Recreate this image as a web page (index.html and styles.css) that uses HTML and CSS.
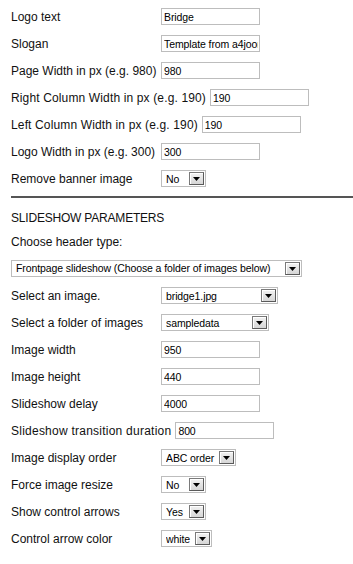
FILE: index.html
```html
<!DOCTYPE html>
<html>
<head>
<meta charset="utf-8">
<link rel="stylesheet" href="styles.css">
</head>
<body>
<div class="panel">
  <div class="row"><label class="lbl">Logo text</label><input class="txt" type="text" value="Bridge"></div>
  <div class="row"><label class="lbl">Slogan</label><input class="txt" type="text" value="Template from a4joomla"></div>
  <div class="row"><label class="lbl">Page Width in px (e.g. 980)</label><input class="txt" type="text" value="980"></div>
  <div class="row"><label class="lbl long">Right Column Width in px (e.g. 190)</label><input class="txt" type="text" value="190"></div>
  <div class="row"><label class="lbl long">Left Column Width in px (e.g. 190)</label><input class="txt" type="text" value="190"></div>
  <div class="row"><label class="lbl">Logo Width in px (e.g. 300)</label><input class="txt" type="text" value="300"></div>
  <div class="row"><label class="lbl">Remove banner image</label><span class="sel w45"><span class="sel-text">No</span><span class="sel-btn"><svg width="7" height="4" viewBox="0 0 7 4"><path d="M0 0H7L3.5 4Z" fill="#000"/></svg></span></span></div>

  <div class="sep"></div>

  <div class="heading">SLIDESHOW PARAMETERS</div>
  <div class="plain">Choose header type:</div>
  <div class="wide-row"><span class="sel w291"><span class="sel-text">Frontpage slideshow (Choose a folder of images below)</span><span class="sel-btn"><svg width="7" height="4" viewBox="0 0 7 4"><path d="M0 0H7L3.5 4Z" fill="#000"/></svg></span></span></div>

  <div class="row"><label class="lbl">Select an image.</label><span class="sel w117"><span class="sel-text">bridge1.jpg</span><span class="sel-btn"><svg width="7" height="4" viewBox="0 0 7 4"><path d="M0 0H7L3.5 4Z" fill="#000"/></svg></span></span></div>
  <div class="row"><label class="lbl">Select a folder of images</label><span class="sel w108"><span class="sel-text">sampledata</span><span class="sel-btn"><svg width="7" height="4" viewBox="0 0 7 4"><path d="M0 0H7L3.5 4Z" fill="#000"/></svg></span></span></div>
  <div class="row"><label class="lbl">Image width</label><input class="txt" type="text" value="950"></div>
  <div class="row"><label class="lbl">Image height</label><input class="txt" type="text" value="440"></div>
  <div class="row"><label class="lbl">Slideshow delay</label><input class="txt" type="text" value="4000"></div>
  <div class="row"><label class="lbl longer">Slideshow transition duration</label><input class="txt" type="text" value="800"></div>
  <div class="row"><label class="lbl">Image display order</label><span class="sel w75"><span class="sel-text">ABC order</span><span class="sel-btn"><svg width="7" height="4" viewBox="0 0 7 4"><path d="M0 0H7L3.5 4Z" fill="#000"/></svg></span></span></div>
  <div class="row"><label class="lbl">Force image resize</label><span class="sel w45"><span class="sel-text">No</span><span class="sel-btn"><svg width="7" height="4" viewBox="0 0 7 4"><path d="M0 0H7L3.5 4Z" fill="#000"/></svg></span></span></div>
  <div class="row"><label class="lbl">Show control arrows</label><span class="sel w45"><span class="sel-text">Yes</span><span class="sel-btn"><svg width="7" height="4" viewBox="0 0 7 4"><path d="M0 0H7L3.5 4Z" fill="#000"/></svg></span></span></div>
  <div class="row"><label class="lbl">Control arrow color</label><span class="sel w51"><span class="sel-text">white</span><span class="sel-btn"><svg width="7" height="4" viewBox="0 0 7 4"><path d="M0 0H7L3.5 4Z" fill="#000"/></svg></span></span></div>
</div>
</body>
</html>
```

FILE: styles.css
```css
html, body {
  margin: 0;
  padding: 0;
  background: #fff;
}
body {
  font-family: "Liberation Sans", Arial, sans-serif;
  font-size: 12px;
  color: #111;
}
.panel {
  padding: 3px 0 0 11px;
}
.row {
  display: flex;
  align-items: center;
  height: 27px;
}
.lbl {
  min-width: 146px;
  margin-right: 4px;
  white-space: nowrap;
  line-height: 14px;
}
.lbl.long {
  letter-spacing: 0.14px;
}
.lbl.longer {
  letter-spacing: 0.24px;
}
.txt {
  box-sizing: border-box;
  width: 99px;
  height: 17px;
  margin: 0;
  padding: 0 1px 0 2px;
  border: 1px solid #bdbdbd;
  font-family: "Liberation Sans", Arial, sans-serif;
  font-size: 10.5px;
  letter-spacing: -0.1px;
  color: #000;
  background: #fff;
  outline: none;
}
.sel {
  box-sizing: border-box;
  display: flex;
  align-items: center;
  height: 17px;
  border: 1px solid #bdbdbd;
  background: #fff;
  padding: 0 1px 0 4px;
  font-size: 10.5px;
  letter-spacing: -0.1px;
  color: #000;
}
.sel-text {
  flex: 1;
  white-space: nowrap;
  overflow: hidden;
}
.sel-btn {
  box-sizing: border-box;
  width: 15px;
  height: 13px;
  display: flex;
  align-items: center;
  justify-content: center;
  border: 1px solid #7a7a7a;
  border-right-color: #5a5a5a;
  border-bottom-color: #5a5a5a;
  background: linear-gradient(#f2f2f2, #d6d6d6);
  box-shadow: inset 1px 1px 0 #fff;
}
.sel-btn svg {
  display: block;
  margin-top: 1px;
}
.w45 { width: 45px; }
.w51 { width: 51px; }
.w75 { width: 75px; }
.w108 { width: 108px; }
.w117 { width: 117px; }
.w291 { width: 291px; }
.sep {
  margin-top: 4px;
  height: 2px;
  background: #555;
}
.heading {
  height: 24px;
  line-height: 24px;
  margin-top: 8px;
  font-size: 12px;
  letter-spacing: -0.2px;
}
.plain {
  height: 24px;
  line-height: 24px;
}
.wide-row {
  display: flex;
  align-items: center;
  height: 28px;
}
```
